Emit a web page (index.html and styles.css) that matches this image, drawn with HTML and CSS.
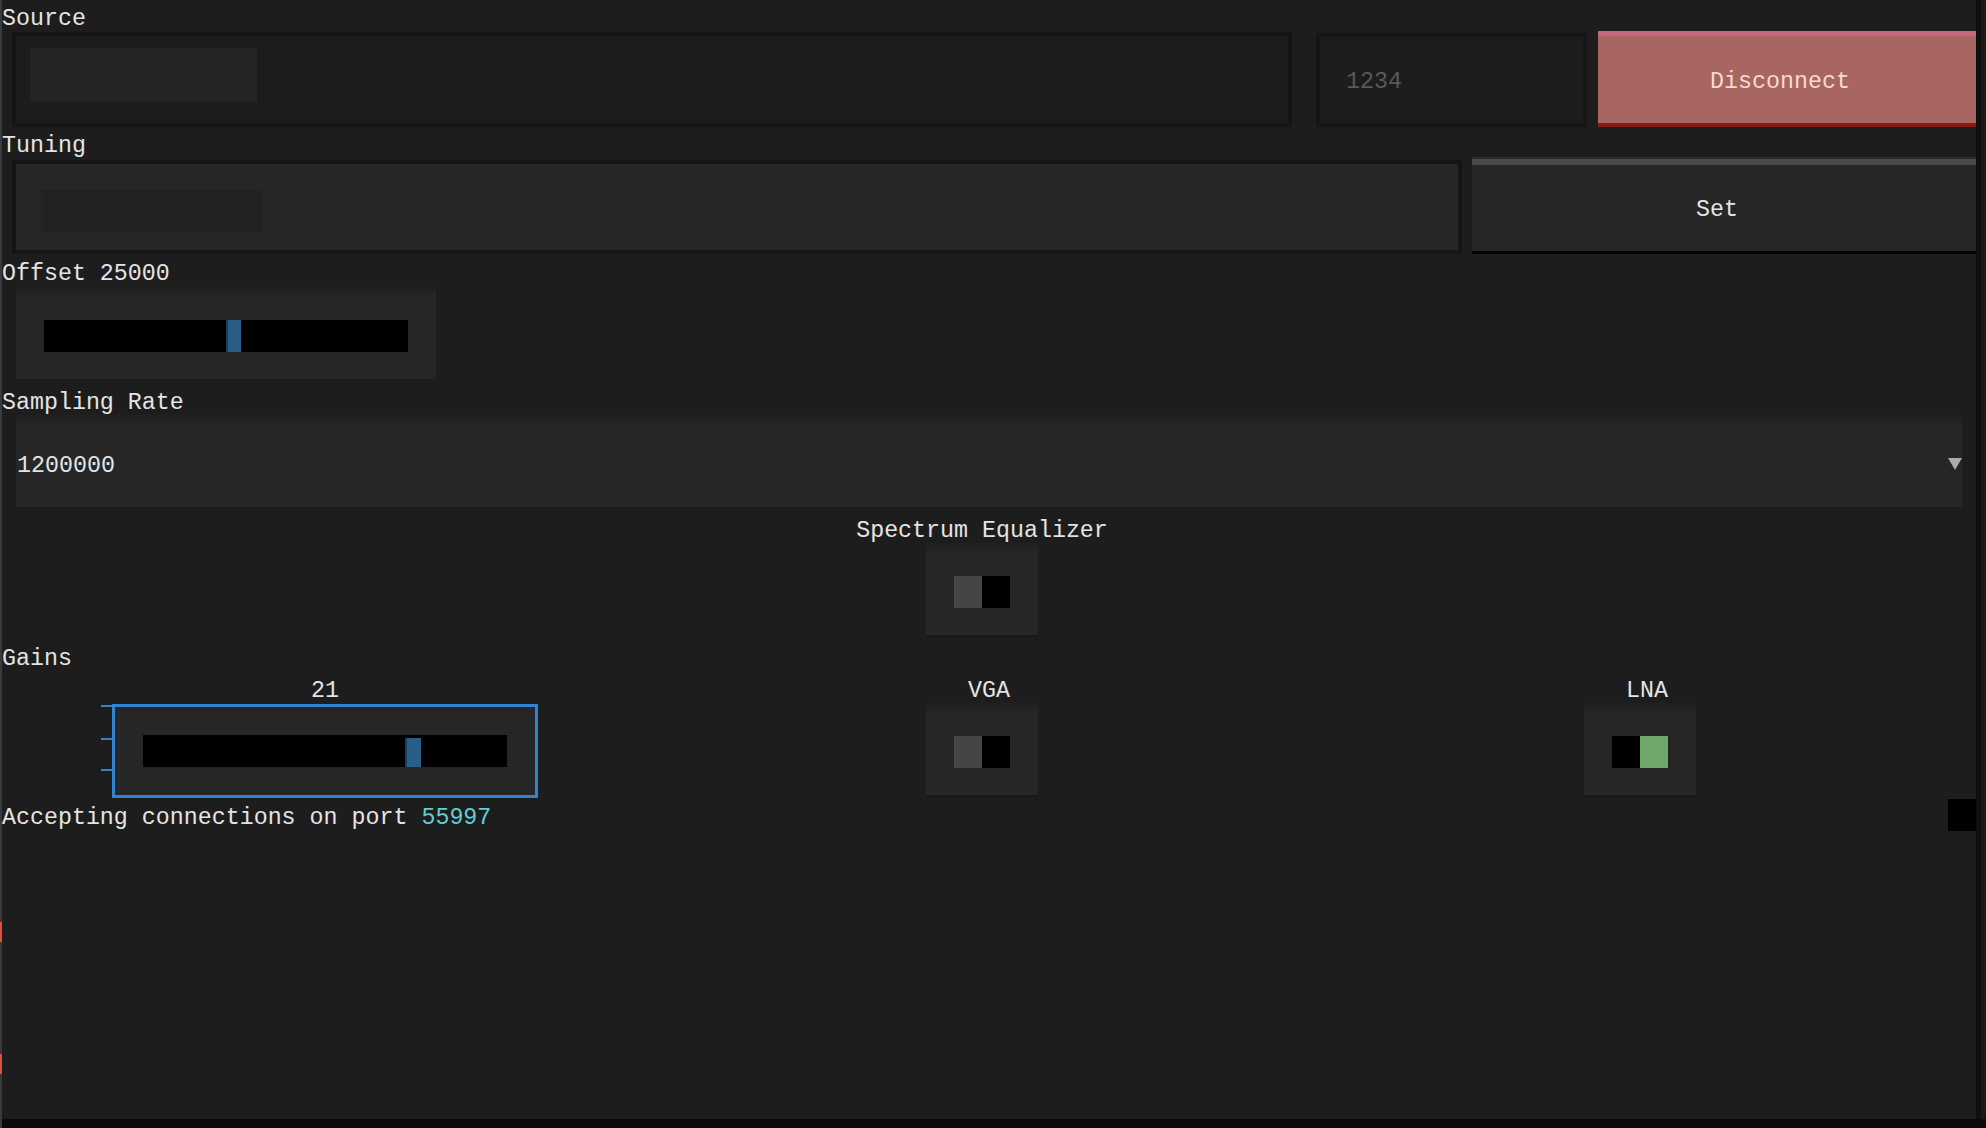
FILE: index.html
```html
<!DOCTYPE html>
<html lang="en">
<head>
<meta charset="utf-8">
<title>Server</title>
<link rel="stylesheet" href="styles.css">
</head>
<body>
<div class="app">
  <div class="edge"></div>
  <div class="win">
    <div class="upper">
      <main class="content">
        <div class="label">Source</div>
        <div class="row row-source">
          <div class="input input-dark input-source"><div class="ph ph-source"></div></div>
          <div class="input input-dark input-port"><span class="hint">1234</span></div>
          <div class="btn btn-disconnect">Disconnect</div>
        </div>

        <div class="label lbl-tuning">Tuning</div>
        <div class="row row-tuning">
          <div class="input input-tuning"><div class="ph ph-tuning"></div></div>
          <div class="btn btn-set">Set</div>
        </div>

        <div class="label lbl-offset">Offset 25000</div>
        <div class="frame slider slider-offset">
          <div class="track"><div class="thumb" style="left:182px"></div></div>
        </div>

        <div class="label lbl-rate">Sampling Rate</div>
        <div class="frame combo">
          <span class="combo-value">1200000</span>
          <span class="combo-arrow"></span>
        </div>

        <div class="cols cols-eq">
          <div class="col"></div>
          <div class="col">
            <div class="label">Spectrum Equalizer</div>
            <div class="frame toggle-box toggle-eq"><div class="toggle"><span class="t-gray"></span><span class="t-black"></span></div></div>
          </div>
          <div class="col"></div>
        </div>

        <div class="label lbl-gains">Gains</div>
        <div class="cols cols-gains">
          <div class="col">
            <div class="label">21</div>
            <div class="slider slider-gain">
              <div class="track"><div class="thumb thumb-gain" style="left:262px"></div></div>
            </div>
          </div>
          <div class="col">
            <div class="label shift">VGA</div>
            <div class="frame toggle-box toggle-gain"><div class="toggle"><span class="t-gray"></span><span class="t-black"></span></div></div>
          </div>
          <div class="col">
            <div class="label shift">LNA</div>
            <div class="frame toggle-box toggle-gain"><div class="toggle"><span class="t-black"></span><span class="t-green"></span></div></div>
          </div>
        </div>

        <div class="status-line">
          <div class="label">Accepting connections on port <span class="port">55997</span></div>
          <div class="blackbox"></div>
        </div>
      </main>
      <div class="rstrip"><div class="rs1"></div><div class="rs2"></div></div>
    </div>
    <div class="statusbar"></div>
  </div>
</div>
</body>
</html>
```

FILE: styles.css
```css
html, body {
  margin: 0;
  padding: 0;
}
body {
  width: 1986px;
  height: 1128px;
  overflow: hidden;
  background: #1d1d1d;
  color: #e4e4e4;
  font-family: "Liberation Mono", "DejaVu Sans Mono", monospace;
  font-size: 23.3px;
}
.app {
  display: flex;
  height: 1128px;
}
.edge {
  width: 2px;
  background: linear-gradient(to bottom,
    #3a3a3a 0px, #3a3a3a 922px,
    #d9533f 922px, #d9533f 942px,
    #3a3a3a 942px, #3a3a3a 1054px,
    #d9533f 1054px, #d9533f 1074px,
    #3a3a3a 1074px);
}
.win {
  flex: 1;
  display: flex;
  flex-direction: column;
}
.upper {
  flex: 1;
  display: flex;
}
.content {
  flex: 1;
  padding-top: 8px;
  display: flex;
  flex-direction: column;
}
.rstrip {
  width: 10px;
  display: flex;
}
.rs1 { width: 5px; background: #0f0f0f; }
.rs2 { width: 5px; background: #1a1a1a; }
.statusbar {
  height: 9px;
  background: #0b0b0b;
}

.label {
  height: 22px;
  line-height: 22px;
  white-space: pre;
}
.shift { padding-left: 14px; }

.row {
  display: flex;
  align-items: flex-start;
  margin-left: 10px;
}
.row-source { margin-top: 1px; height: 96px; }
.row-tuning { margin-top: 2px; height: 95px; }

.input {
  box-sizing: border-box;
  border: 4px solid #151515;
  position: relative;
}
.input-dark { background: #1c1c1c; }
.input-source {
  width: 1280px;
  height: 95px;
  margin-top: 1px;
  padding: 12px 0 0 14px;
}
.ph-source {
  width: 227px;
  height: 54px;
  background: #242424;
}
.input-port {
  width: 271px;
  height: 94px;
  margin-left: 24px;
  margin-top: 2px;
  display: flex;
  align-items: center;
  padding-left: 26px;
  padding-top: 4px;
}
.hint { color: #595959; }

.btn {
  box-sizing: border-box;
  display: flex;
  align-items: center;
  justify-content: center;
  padding-top: 4px;
  padding-right: 14px;
}
.btn-disconnect {
  width: 378px;
  height: 96px;
  margin-left: 11px;
  background: #a76662;
  border-top: 5px solid #c6677d;
  border-bottom: 4px solid #8c1a14;
  color: #f8d8d2;
}

.lbl-tuning { margin-top: 8px; }
.input-tuning {
  width: 1450px;
  height: 94px;
  margin-top: 1px;
  background: #262626;
  padding: 26px 0 0 25px;
}
.ph-tuning {
  width: 221px;
  height: 42px;
  background: #222222;
}
.btn-set {
  width: 504px;
  height: 95px;
  margin-left: 10px;
  background: #262626;
  border-top: 6px solid #4a4a4a;
  border-bottom: 3px solid #000;
  box-shadow: 0 -2px 0 0 #2e2e2e;
  color: #e4e4e4;
}

.frame {
  box-sizing: border-box;
  background: #262626;
  border-top: 6px solid #212121;
}

.lbl-offset { margin-top: 9px; }
.slider {
  box-sizing: border-box;
  display: flex;
  align-items: center;
  justify-content: center;
}
.slider-offset {
  width: 420px;
  height: 92px;
  margin-top: 2px;
  margin-left: 14px;
  padding-bottom: 1px;
}
.track {
  position: relative;
  width: 364px;
  height: 32px;
  background: #000;
}
.thumb {
  position: absolute;
  top: 0;
  width: 15px;
  height: 32px;
  background: #285e88;
  border-left: 2px solid #1a3c5c;
  box-sizing: border-box;
}

.lbl-rate { margin-top: 13px; }
.combo {
  width: 1946px;
  height: 92px;
  margin-top: 1px;
  margin-left: 14px;
  display: flex;
  align-items: center;
  justify-content: space-between;
}
.combo-value { margin-left: 1px; padding-top: 4px; }
.combo-arrow {
  width: 0;
  height: 0;
  border-left: 7px solid transparent;
  border-right: 7px solid transparent;
  border-top: 12px solid #ababab;
}

.cols {
  display: grid;
  grid-template-columns: 646px 668px 648px;
}
.col {
  display: flex;
  flex-direction: column;
  align-items: center;
}
.cols-eq { margin-top: 13px; }
.toggle-box {
  width: 112px;
  height: 92px;
  display: flex;
  align-items: center;
  justify-content: center;
  box-shadow: 0 3px 0 0 #1a1a1a;
}
.toggle-eq { margin-top: 1px; }
.toggle-gain { margin-top: 1px; }
.toggle {
  display: flex;
  height: 32px;
}
.toggle span {
  width: 28px;
  height: 32px;
}
.t-gray { background: #454545; }
.t-black { background: #000; }
.t-green { background: #70a869; }

.lbl-gains { margin-top: 13px; }
.cols-gains { margin-top: 10px; }
.slider-gain {
  position: relative;
  width: 426px;
  height: 94px;
  margin-top: 2px;
  background: #262626;
  border: 3px solid #3282d2;
}
.slider-gain::before {
  content: "";
  position: absolute;
  left: -14px;
  top: -2px;
  width: 11px;
  height: 2px;
  background: #3282d2;
  box-shadow: 0 33px 0 0 #3282d2, 0 64px 0 0 #3282d2;
}
.thumb-gain {
  top: 3px;
  height: 29px;
  width: 16px;
}

.status-line {
  margin-top: 9px;
  display: flex;
  justify-content: space-between;
  align-items: flex-start;
}
.port { color: #5fcfcf; }
.blackbox {
  width: 28px;
  height: 32px;
  margin-top: -8px;
  background: #000;
}
```
